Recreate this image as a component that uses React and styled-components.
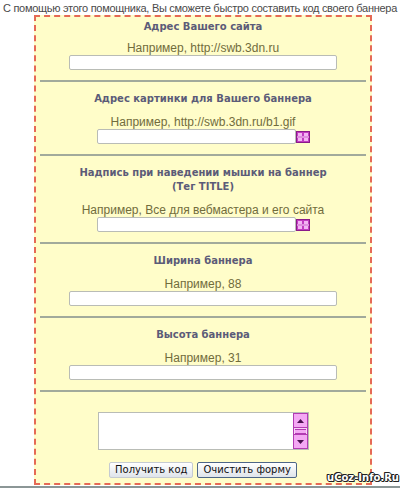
import React from 'react'
import styled, { createGlobalStyle } from 'styled-components'

const GlobalStyle = createGlobalStyle`
  html, body {
    margin: 0;
    padding: 0;
    background: #fff;
  }
  body {
    font-family: "Liberation Sans", Arial, sans-serif;
  }
`

const sections = [
  { title: ['Адрес Вашего сайта'], example: 'Например, http://swb.3dn.ru', picker: false },
  { title: ['Адрес картинки для Вашего баннера'], example: 'Например, http://swb.3dn.ru/b1.gif', picker: true },
  { title: ['Надпись при наведении мышки на баннер', '(Тег TITLE)'], example: 'Например, Все для вебмастера и его сайта', picker: true },
  { title: ['Ширина баннера'], example: 'Например, 88', picker: false },
  { title: ['Высота баннера'], example: 'Например, 31', picker: false },
]

const PickerIcon = () => (
  <svg width="14" height="12" viewBox="0 0 14 12">
    <rect x="0.5" y="0.5" width="13" height="11" fill="#c23cc2" stroke="#8a1a8a" />
    <rect x="2" y="2" width="4" height="3" fill="#f4b4f4" />
    <rect x="8" y="2" width="4" height="3" fill="#f4b4f4" />
    <rect x="2" y="7" width="4" height="3" fill="#f4b4f4" />
    <rect x="8" y="7" width="4" height="3" fill="#f4b4f4" />
    <rect x="1" y="5.5" width="12" height="1" fill="#fbe0fb" />
  </svg>
)

const Arrow = ({ down }) => (
  <svg width="7" height="4" viewBox="0 0 7 4">
    <polygon points={down ? '0,0 7,0 3.5,4' : '0,4 7,4 3.5,0'} fill="#4a1050" />
  </svg>
)

const App = () => {
  return (
    <>
      <GlobalStyle />
      <Page>
        <Intro>С помощью этого помощника, Вы сможете быстро составить код своего баннера</Intro>
        <FormBox>
          {sections.map((s, i) => (
            <React.Fragment key={i}>
              <Section $first={i === 0}>
                <Title>
                  {s.title.map((t, j) => <div key={j}>{t}</div>)}
                </Title>
                <Example $first={i === 0}>{s.example}</Example>
                {s.picker ? (
                  <PickerRow>
                    <NarrowInput type="text" />
                    <Picker><PickerIcon /></Picker>
                  </PickerRow>
                ) : (
                  <WideInput type="text" />
                )}
              </Section>
              <Separator />
            </React.Fragment>
          ))}
          <ResultSection>
            <TextBox>
              <CodeArea />
              <ScrollBar>
                <ScrollButton><Arrow /></ScrollButton>
                <ScrollThumb />
                <ScrollButton><Arrow down /></ScrollButton>
              </ScrollBar>
            </TextBox>
            <Buttons>
              <Button type="button">Получить код</Button>
              <Button type="button" $default>Очистить форму</Button>
            </Buttons>
          </ResultSection>
        </FormBox>
        <BottomLine />
        <Watermark>uCoz-Info.Ru</Watermark>
      </Page>
    </>
  )
}

const Page = styled.div`
  position: relative;
  width: 400px;
  height: 488px;
  overflow: hidden;
  background: #fff;
`

const Intro = styled.div`
  height: 15px;
  padding-top: 1px;
  box-sizing: border-box;
  font-size: 11px;
  line-height: 14px;
  color: #4a4a4a;
  text-align: center;
  white-space: nowrap;
  letter-spacing: -0.28px;
`

const FormBox = styled.div`
  box-sizing: border-box;
  width: 338px;
  margin-left: 34px;
  border: 2px dashed #e56a55;
  background: #fffdc9;
  display: flex;
  flex-direction: column;
`

const Section = styled.div`
  display: flex;
  flex-direction: column;
  align-items: center;
  padding: ${p => (p.$first ? '3px' : '10px')} 0 10px;
`

const Title = styled.div`
  font-family: "DejaVu Sans", Verdana, sans-serif;
  font-weight: bold;
  font-size: 10px;
  line-height: 14px;
  color: #5b5b78;
  text-align: center;
`

const Example = styled.div`
  margin-top: ${p => (p.$first ? '8px' : '10px')};
  font-size: 12px;
  line-height: 13px;
  color: #716c3c;
  text-align: center;
  white-space: nowrap;
`

const inputLook = `
  box-sizing: border-box;
  height: 15px;
  margin: 0;
  padding: 0 2px;
  border: 1px solid #b9bcb6;
  border-radius: 2px;
  background: #fff;
  outline: none;
  font-size: 11px;
`

const WideInput = styled.input`
  ${inputLook}
  width: 268px;
`

const PickerRow = styled.div`
  display: flex;
  align-items: center;
  height: 15px;
`

const NarrowInput = styled.input`
  ${inputLook}
  width: 199px;
`

const Picker = styled.span`
  display: flex;
  width: 14px;
  height: 12px;
`

const Separator = styled.div`
  height: 2px;
  margin: 0 4px;
  background: #a2aa9b;
`

const ResultSection = styled.div`
  display: flex;
  flex-direction: column;
  align-items: center;
  padding: 20px 0 5px;
`

const TextBox = styled.div`
  box-sizing: border-box;
  display: flex;
  width: 211px;
  height: 38px;
  border: 1px solid #b9bcb6;
  background: #fff;
`

const CodeArea = styled.div`
  flex: 1;
`

const ScrollBar = styled.div`
  display: flex;
  flex-direction: column;
  justify-content: space-between;
  width: 15px;
  box-sizing: border-box;
  border: 1px solid #b23bb2;
  background: #f9d2f9;
`

const ScrollButton = styled.div`
  display: flex;
  align-items: center;
  justify-content: center;
  height: 13px;
  background: #f4a8f4;
  border-bottom: 1px solid #b23bb2;

  &:last-child {
    border-bottom: none;
    border-top: 1px solid #b23bb2;
  }
`

const ScrollThumb = styled.div`
  height: 3px;
  margin: 0 1px;
  border-top: 1px solid #b23bb2;
  border-bottom: 1px solid #b23bb2;
  background: #f4a8f4;
`

const Buttons = styled.div`
  display: flex;
  gap: 4px;
  margin-top: 12px;
`

const Button = styled.button`
  box-sizing: border-box;
  height: 16px;
  padding: 0 5px;
  font-family: "DejaVu Sans", Verdana, sans-serif;
  font-size: 10px;
  line-height: 14px;
  color: #111;
  background: linear-gradient(#ffffff, #dfe4ea);
  border: 1px solid ${p => (p.$default ? '#4d6687' : '#c5cbd2')};
  border-radius: 2px;
  cursor: pointer;
`

const BottomLine = styled.div`
  height: 2px;
  margin-top: 1px;
  background: #8b9696;
`

const Watermark = styled.div`
  position: absolute;
  right: 1px;
  top: 472px;
  font-family: "DejaVu Sans", Verdana, sans-serif;
  font-weight: bold;
  font-size: 10px;
  line-height: 12px;
  color: #fff;
  text-shadow: 1px 0 0 #222, -1px 0 0 #222, 0 1px 0 #222, 0 -1px 0 #222, 1px 1px 0 #222, -1px -1px 0 #222;
`

export default App
